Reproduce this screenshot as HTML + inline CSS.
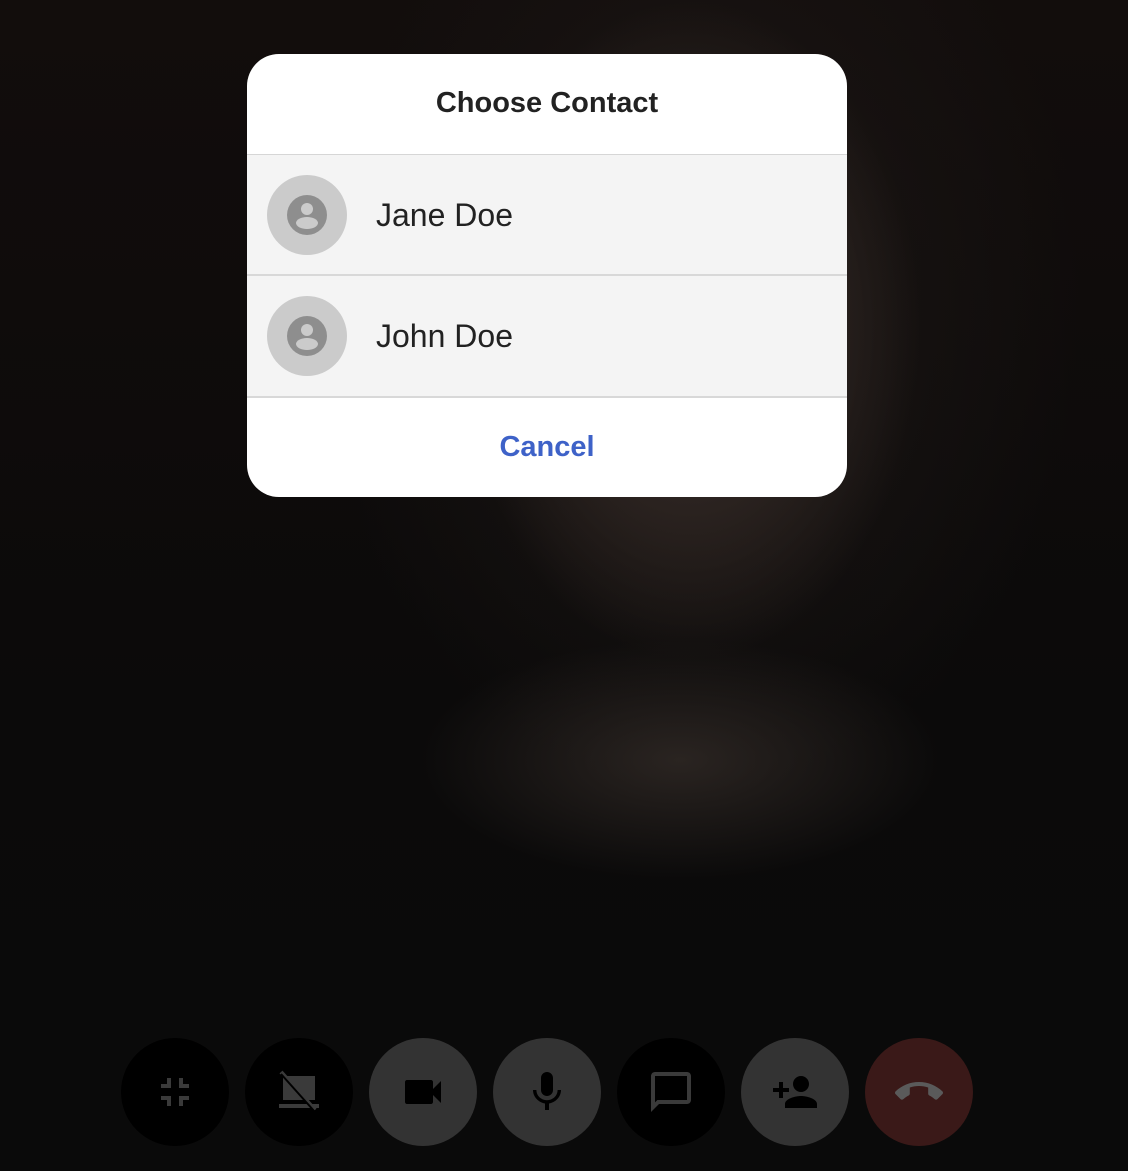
<!DOCTYPE html>
<html><head><meta charset="utf-8"><style>
html,body{margin:0;padding:0;width:1128px;height:1171px;overflow:hidden;background:#070707;font-family:"Liberation Sans",Roboto,sans-serif}
.bg{position:absolute;inset:0;background:
radial-gradient(ellipse 230px 330px at 690px 330px,#3a302c 0%,#2a221f 55%,rgba(20,16,15,0) 100%),
radial-gradient(ellipse 260px 120px at 680px 760px,#2a2421 0%,rgba(20,18,17,0) 100%),
radial-gradient(ellipse 380px 500px at 700px 300px,#1c1715 0%,rgba(10,9,9,0) 100%),
linear-gradient(#120d0c 0%,#0b0a0a 60%,#0a0a0a 100%)}
.modal{position:absolute;left:247px;top:54px;width:600px;height:443px;background:#fff;border-radius:32px;overflow:hidden}
.title{height:100px;line-height:98px;text-align:center;font-weight:bold;font-size:29px;color:#222;border-bottom:1px solid #d6d6d6}
.row{height:120px;background:#f4f4f4;border-bottom:2px solid #d8d8d8;position:relative}
.row .av{position:absolute;left:20px;top:20px;width:80px;height:80px;border-radius:50%;background:#cbcbcb}
.row .av svg{position:absolute;left:20px;top:20px}
.row .nm{position:absolute;left:129px;top:0;line-height:120px;font-size:32px;color:#222}
.cancel{height:100px;line-height:98px;text-align:center;font-weight:bold;font-size:29px;color:#3e62c8}
.btn{position:absolute;top:1038px;width:108px;height:108px;border-radius:50%}
.btn svg{position:absolute;left:30px;top:30px}
</style></head><body>
<div class="bg"></div>
<div class="modal">
<div class="title">Choose Contact</div>
<div class="row" style="height:119px"><div class="av"><svg width="40" height="40" viewBox="0 0 40 40"><circle cx="20" cy="20" r="20" fill="#8e8e8e"/><circle cx="20" cy="14" r="6" fill="#cbcbcb"/><ellipse cx="20" cy="28" rx="11" ry="6" fill="#cbcbcb"/></svg></div><div class="nm">Jane Doe</div></div>
<div class="row"><div class="av"><svg width="40" height="40" viewBox="0 0 40 40"><circle cx="20" cy="20" r="20" fill="#8e8e8e"/><circle cx="20" cy="14" r="6" fill="#cbcbcb"/><ellipse cx="20" cy="28" rx="11" ry="6" fill="#cbcbcb"/></svg></div><div class="nm">John Doe</div></div>
<div class="cancel">Cancel</div>
</div>

<div class="btn" style="left:121px;background:#000"><svg width="48" height="48" viewBox="0 0 24 24" fill="#3a3a3a"><path d="M5 16h3v3h2v-5H5v2zm3-8H5v2h5V5H8v3zm6 11h2v-3h3v-2h-5v5zm2-11V5h-2v5h5V8h-3z"/></svg></div>
<div class="btn" style="left:245px;background:#000"><svg width="48" height="48" viewBox="0 0 24 24" fill="#3a3a3a"><path d="M4 4h16v12H4z"/><path d="M2 18h20v2H2z"/><path d="M3 2l17 19" stroke="#3a3a3a" stroke-width="2"/><path d="M3 3l17 19" stroke="#000" stroke-width="1"/></svg></div>
<div class="btn" style="left:369px;background:#333"><svg width="48" height="48" viewBox="0 0 24 24" fill="#000"><path d="M17 10.5V7c0-.55-.45-1-1-1H4c-.55 0-1 .45-1 1v10c0 .55.45 1 1 1h12c.55 0 1-.45 1-1v-3.5l4 4v-11l-4 4z"/></svg></div>
<div class="btn" style="left:493px;background:#333"><svg width="48" height="48" viewBox="0 0 24 24" fill="#000"><path d="M12 14c1.66 0 3-1.34 3-3V5c0-1.66-1.34-3-3-3S9 3.34 9 5v6c0 1.66 1.34 3 3 3zm5.3-3c0 3-2.54 5.1-5.3 5.1S6.7 14 6.7 11H5c0 3.41 2.72 6.23 6 6.72V21h2v-3.28c3.28-.48 6-3.3 6-6.72h-1.7z"/></svg></div>
<div class="btn" style="left:617px;background:#000"><svg width="48" height="48" viewBox="0 0 24 24" fill="#3a3a3a"><path d="M20 2H4c-1.1 0-2 .9-2 2v18l4-4h14c1.1 0 2-.9 2-2V4c0-1.1-.9-2-2-2zm0 14H5.2L4 17.2V4h16v12z"/></svg></div>
<div class="btn" style="left:741px;background:#333"><svg width="48" height="48" viewBox="0 0 24 24" fill="#000"><path d="M15 12c2.21 0 4-1.79 4-4s-1.79-4-4-4-4 1.79-4 4 1.79 4 4 4zm-9-2V7H4v3H1v2h3v3h2v-3h3v-2H6zm9 4c-2.67 0-8 1.34-8 4v2h16v-2c0-2.66-5.33-4-8-4z"/></svg></div>
<div class="btn" style="left:865px;background:#3a1918"><svg width="48" height="48" viewBox="0 0 24 24" fill="#5a5a5a"><path d="M12 9c-1.6 0-3.15.25-4.6.72v3.1c0 .39-.23.74-.56.9-.98.49-1.87 1.12-2.66 1.85-.18.18-.43.28-.7.28-.28 0-.53-.11-.71-.29L.29 13.08c-.18-.17-.29-.42-.29-.7 0-.28.11-.53.29-.71C3.34 8.78 7.46 7 12 7s8.66 1.78 11.71 4.67c.18.18.29.43.29.71 0 .28-.11.53-.29.71l-2.48 2.48c-.18.18-.43.29-.71.29-.27 0-.52-.11-.7-.28-.79-.74-1.69-1.36-2.67-1.85-.33-.16-.56-.5-.56-.9v-3.1C15.15 9.25 13.6 9 12 9z"/></svg></div>
</body></html>
